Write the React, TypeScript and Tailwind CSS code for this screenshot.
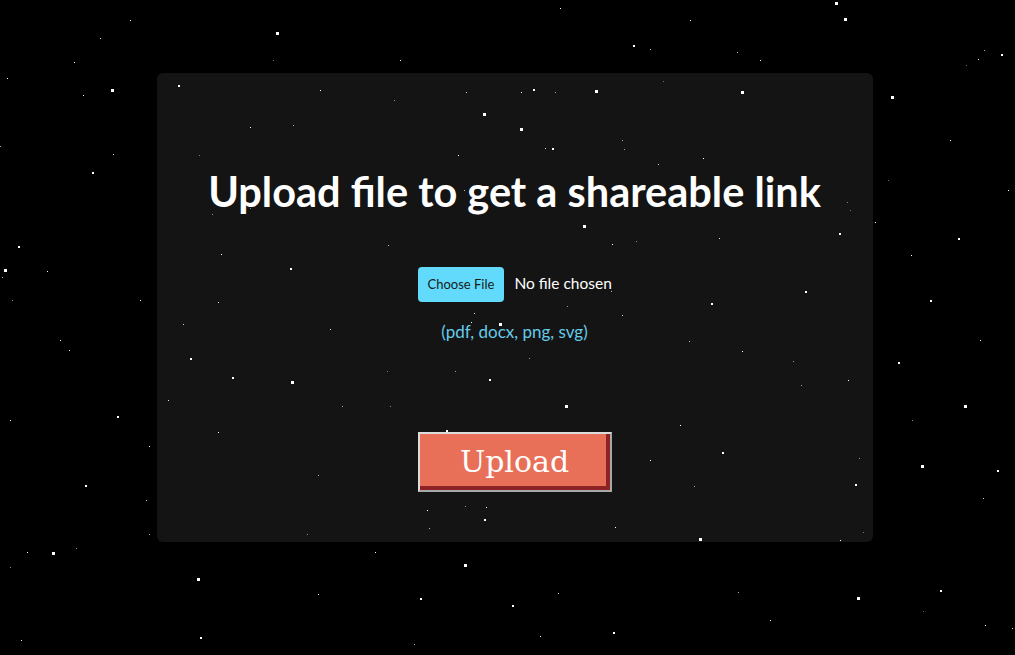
import { useMemo } from "react";

interface Star {
  x: number;
  y: number;
  size: number;
  opacity: number;
}

// stars that are easy to spot in the design
const brightStars: [number, number, number][] = [
  [276, 32, 3], [111, 89, 3], [74, 62, 1], [83, 95, 1], [7, 78, 1], [835, 2, 3], [844, 18, 3],
  [633, 45, 2], [1001, 54, 2], [891, 96, 3], [741, 91, 3], [595, 90, 3], [533, 89, 2],
  [521, 92, 1], [483, 113, 3], [520, 128, 3], [552, 148, 2], [458, 155, 1], [250, 127, 1],
  [178, 85, 2], [92, 172, 2], [4, 269, 3], [18, 246, 2], [47, 271, 1], [290, 268, 2],
  [221, 254, 1], [583, 225, 3], [612, 244, 1], [839, 233, 2], [958, 238, 2], [911, 255, 1],
  [805, 291, 2], [711, 303, 2], [471, 322, 1], [499, 323, 3], [190, 358, 2], [232, 377, 2],
  [291, 381, 3], [489, 379, 2], [565, 405, 3], [742, 351, 1], [848, 380, 1], [898, 362, 2],
  [964, 405, 3], [117, 416, 2], [52, 552, 3], [197, 578, 3], [464, 564, 3], [512, 605, 2],
  [699, 538, 3], [840, 540, 1], [921, 465, 3], [855, 484, 2], [997, 470, 2], [218, 432, 1],
  [650, 460, 1], [722, 452, 2], [680, 425, 1], [615, 527, 1], [484, 519, 2], [427, 510, 1],
  [446, 430, 2], [486, 507, 1], [85, 485, 2], [27, 552, 1], [149, 446, 1], [940, 590, 2],
  [857, 597, 3], [985, 625, 1], [613, 632, 2], [420, 598, 2], [540, 636, 1], [200, 637, 2],
  [318, 594, 1], [375, 552, 1], [770, 620, 1], [703, 158, 1], [875, 222, 1], [930, 300, 2],
  [1008, 190, 1], [980, 340, 1], [60, 340, 1], [140, 300, 1], [320, 90, 1], [400, 60, 1],
  [690, 20, 1], [760, 60, 1], [560, 8, 1], [130, 20, 1], [950, 140, 1], [10, 420, 1],
];

function makeStars(): Star[] {
  let seed = 1337;
  const rand = () => {
    seed = (seed * 16807) % 2147483647;
    return (seed - 1) / 2147483646;
  };
  const stars: Star[] = brightStars.map(([x, y, size]) => ({ x, y, size, opacity: 1 }));
  for (let i = 0; i < 70; i++) {
    stars.push({
      x: Math.floor(rand() * 1015),
      y: Math.floor(rand() * 655),
      size: 1,
      opacity: 0.4 + rand() * 0.5,
    });
  }
  return stars;
}

export default function App() {
  const stars = useMemo(makeStars, []);

  return (
    <div className="relative h-[655px] w-full overflow-hidden bg-black font-['Lato','Noto_Sans',sans-serif]">
      <div aria-hidden className="pointer-events-none absolute inset-0">
        {stars.map((star, i) => (
          <span
            key={i}
            className="absolute bg-white"
            style={{ left: star.x, top: star.y, width: star.size, height: star.size, opacity: star.opacity }}
          />
        ))}
      </div>

      <div className="relative flex justify-center pt-[73px] pl-[14px]">
        <div className="flex h-[469px] w-[716px] flex-col items-center rounded-md bg-[rgba(255,255,255,0.08)] pt-[88px]">
          <h1 className="text-[41.5px] leading-[60px] font-bold text-white">Upload file to get a shareable link</h1>

          <input
            className="mt-[46px] ml-[16px] w-[210px] text-[15.5px] text-white file:mr-[10px] file:h-[35px] file:cursor-pointer file:rounded file:border-0 file:bg-[#61dafb] file:px-[10px] file:text-[13px] file:text-[#1a1a1a]"
            type="file"
          />

          <p className="mt-[17px] text-[17px] text-[#66cbea]">(pdf, docx, png, svg)</p>

          <button
            className="mt-[87px] h-[60px] w-[194px] border-2 border-t-[#dcdcdc] border-r-[#a8a8a8] border-b-[#a8a8a8] border-l-[#dcdcdc] bg-[#e87058] font-['DejaVu_Serif',serif] text-[30px] text-white shadow-[inset_-4px_-4px_0_#8e2326]"
            type="button"
          >
            Upload
          </button>
        </div>
      </div>
    </div>
  );
}
